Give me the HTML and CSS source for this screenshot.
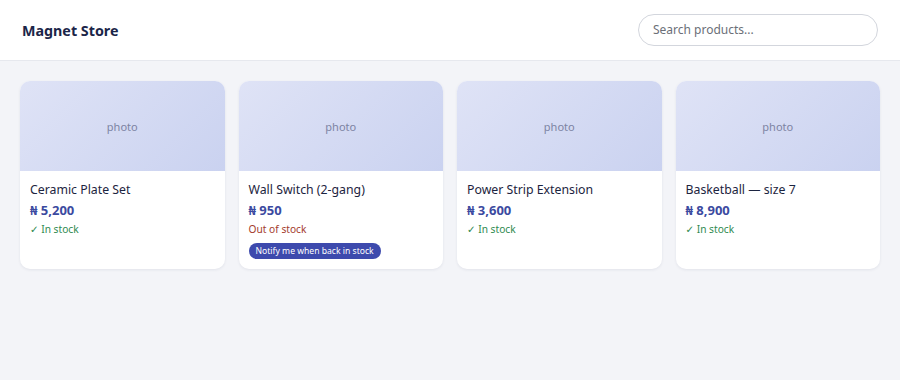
FILE: index.html
```html
<!DOCTYPE html>
<html>
<head>
<meta charset="utf-8">
<link rel="stylesheet" href="styles.css">
</head>
<body>
<header class="topbar">
  <div class="brand">Magnet Store</div>
  <input class="search" type="text" placeholder="Search products...">
</header>
<main class="grid">
  <div class="card">
    <div class="photo">photo</div>
    <div class="info">
      <div class="name">Ceramic Plate Set</div>
      <div class="price">₦ 5,200</div>
      <div class="stock in">✓ In stock</div>
    </div>
  </div>
  <div class="card">
    <div class="photo">photo</div>
    <div class="info">
      <div class="name">Wall Switch (2-gang)</div>
      <div class="price">₦ 950</div>
      <div class="stock out">Out of stock</div>
      <button class="notify">Notify me when back in stock</button>
    </div>
  </div>
  <div class="card">
    <div class="photo">photo</div>
    <div class="info">
      <div class="name">Power Strip Extension</div>
      <div class="price">₦ 3,600</div>
      <div class="stock in">✓ In stock</div>
    </div>
  </div>
  <div class="card">
    <div class="photo">photo</div>
    <div class="info">
      <div class="name">Basketball — size 7</div>
      <div class="price">₦ 8,900</div>
      <div class="stock in">✓ In stock</div>
    </div>
  </div>
</main>
</body>
</html>
```
FILE: styles.css
```css
* { box-sizing: border-box; }
html, body { margin: 0; padding: 0; }
body {
  font-family: "Noto Sans", "DejaVu Sans", sans-serif;
  background: #f3f4f8;
  color: #1c2440;
  width: 900px;
  height: 380px;
}
.topbar {
  height: 61px;
  background: #fff;
  border-bottom: 1px solid #e6e8ee;
  display: flex;
  align-items: center;
  justify-content: space-between;
  padding: 0 22px;
}
.brand {
  font-size: 14.3px;
  font-weight: 700;
  color: #1b2548;
}
.search {
  width: 240px;
  height: 32px;
  border: 1px solid #d3d6dd;
  border-radius: 16px;
  padding: 0 14px;
  font-family: inherit;
  font-size: 12px;
  color: #333;
  outline: none;
  margin-top: -1px;
}
.search::placeholder { color: #6b6f78; }
.grid {
  display: grid;
  grid-template-columns: repeat(4, 1fr);
  gap: 14px;
  padding: 20px;
}
.card {
  background: #fff;
  border-radius: 10px;
  overflow: hidden;
  box-shadow: 0 1px 3px rgba(30, 40, 80, 0.08);
}
.photo {
  height: 90px;
  background: linear-gradient(135deg, #dfe3f6, #cad2f0);
  display: flex;
  align-items: center;
  justify-content: center;
  font-size: 11px;
  color: #7d84a3;
}
.info {
  padding: 10px 10px 10px;
  display: flex;
  flex-direction: column;
  align-items: flex-start;
}
.name {
  font-size: 12.3px;
  line-height: 18px;
  color: #1c2440;
}
.price {
  font-size: 13px;
  font-weight: 700;
  line-height: 20px;
  color: #3b4aa0;
  margin-top: 1px;
}
.stock {
  font-size: 10.2px;
  line-height: 16px;
  margin-top: 1px;
}
.stock.in { color: #2f8a4f; }
.stock.out { color: #a33a2c; }
.notify {
  margin-top: 6px;
  height: 16px;
  padding: 0 7px;
  border: none;
  border-radius: 8px;
  background: #3d4aad;
  color: #fff;
  font-family: inherit;
  font-size: 8.6px;
  line-height: 16px;
}
```
